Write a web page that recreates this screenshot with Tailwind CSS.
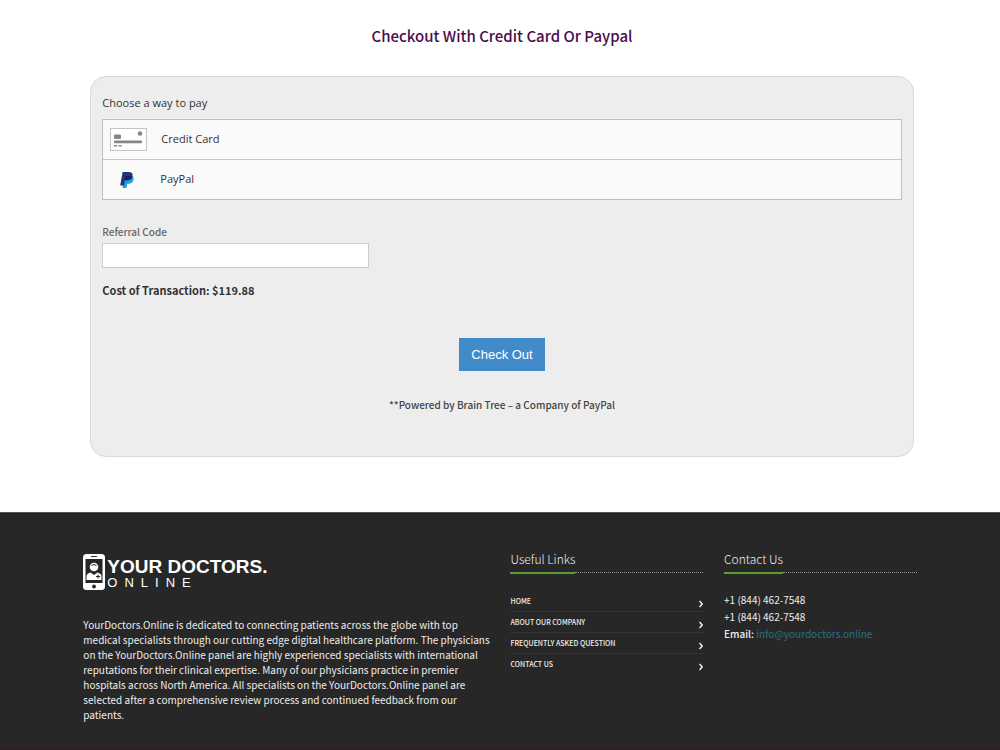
<!DOCTYPE html>
<html lang="en">
<head>
    <meta charset="UTF-8">
    <meta name="viewport" content="width=device-width, initial-scale=1.0">
    <title>Checkout | YourDoctors.Online</title>
    <script src="https://cdn.jsdelivr.net/npm/@tailwindcss/browser@4"></script>
</head>
<body class="bg-white font-['Noto_Sans_CJK_SC',sans-serif] text-[#333]">
    <!-- Checkout -->
    <main class="w-5/6 max-w-6xl mx-auto pt-6 pb-[55px] pl-[7px] pr-[3px]">
        <h1 class="text-[15px] leading-6 font-medium text-center text-[#4b0d4b]">Checkout With Credit Card Or Paypal</h1>

        <form class="mt-7 rounded-2xl border border-[#d9d9d9] bg-[#ededed] px-[11px] pt-4 pb-[41px]" action="#" method="post">
            <h2 class="text-[11px] leading-5 font-['Open_Sans',sans-serif]">Choose a way to pay</h2>
            <div class="mt-1.5 border border-[#bfbfbf] bg-[#fafafa] divide-y divide-[#c8c8c8] font-['Open_Sans',sans-serif] text-[11px]">
                <button type="button" class="flex items-center w-full h-10 px-[7px] text-left cursor-pointer">
                    <svg class="w-[37px] h-6 mr-3.5" viewBox="0 0 37 24" fill="#868686">
                        <rect x="0.5" y="0.5" width="36" height="22" fill="#fff" stroke="#c4c4c4"/>
                        <rect x="4" y="6.500" width="7" height="4.500" rx="1"/>
                        <circle cx="30" cy="5.500" r="2.300"/>
                        <rect x="4" y="12.500" width="28" height="2.700" rx="1"/>
                        <rect x="4" y="17" width="3" height="1.500"/>
                        <rect x="8.500" y="17" width="3" height="1.500"/>
                    </svg>
                    Credit Card
                </button>
                <button type="button" class="flex items-center w-full h-[39px] px-[7px] text-left cursor-pointer">
                    <svg class="w-9 h-6 mr-3.5" viewBox="0 0 36 24">
                        <path d="M14.500 7.500H20c3 0 4 1.600 3.500 4-.6 3-2.400 4.200-5 4.200h-1.300L16.500 20h-4z" fill="#1ba0dd"/>
                        <path d="M12.600 4h6.200c2.900 0 4.200 1.500 3.700 4-.6 3-2.500 4.300-5.400 4.300h-2.200L14 17.500h-3.800z" fill="#263577"/>
                        <path d="M15.400 8h6.900c-.7 3-2.500 4.300-5.200 4.300h-2.200z" fill="#1b1f5b"/>
                    </svg>
                    PayPal
                </button>
            </div>

            <label for="referral" class="block mt-6 text-[10px] leading-4 font-medium text-[#666]">Referral Code</label>
            <input id="referral" type="text" class="block w-1/3 h-[25px] mt-[3px] px-2 border border-[#ccc] bg-white text-xs">

            <p class="mt-3 text-[11px] leading-5 font-bold">Cost of Transaction: $119.88</p>

            <div class="mt-[38px] text-center">
                <button type="submit" class="h-[33px] px-3 bg-[#428bca] text-white text-[13px] font-['Liberation_Sans',sans-serif] cursor-pointer">Check Out</button>
                <p class="mt-6 text-[10px] leading-5 font-medium text-[#444]">**Powered by Brain Tree – a Company of PayPal</p>
            </div>
        </form>
    </main>

    <!-- Footer -->
    <footer class="bg-[#272727] border-t border-t-[#555] border-b-2 border-b-[#2b2025] text-[#eee]">
        <div class="w-5/6 max-w-6xl mx-auto pt-10 pb-[26px] grid grid-cols-4 gap-[21px]">
            <div class="col-span-2">
                <a href="#" class="flex items-center gap-0.5 text-white font-['Liberation_Sans',sans-serif]">
                    <svg class="w-[22px] h-[38px]" viewBox="0 0 22 38">
                        <rect x="0" y="1" width="22" height="36" rx="3.500" fill="#fff"/>
                        <rect x="2.500" y="6" width="17" height="24" fill="#272727"/>
                        <rect x="8" y="3" width="6" height="1" rx="0.500" fill="#272727"/>
                        <circle cx="11" cy="33.500" r="1.900" fill="#272727"/>
                        <circle cx="11" cy="14" r="4.300" fill="#fff"/>
                        <path d="M8.500 12.500q2.500-2 5 0" fill="none" stroke="#272727"/>
                        <path d="M3.500 27v-3.500q0-3 4-4l3.500 2.500 3.500-2.500q4 1 4 4V27z" fill="#fff"/>
                        <path d="M15 21.500v4M13 23.500h4" stroke="#272727"/>
                    </svg>
                    <span class="pt-1">
                        <span class="block text-[19px] leading-[18px] font-bold">YOUR DOCTORS.</span>
                        <span class="block text-[13px] leading-[14px] tracking-[7px]">ONLINE</span>
                    </span>
                </a>
                <p class="mt-[26px] -mr-1 text-[10px] leading-[15px]">YourDoctors.Online is dedicated to connecting patients across the globe with top medical specialists through our cutting edge digital healthcare platform. The physicians on the YourDoctors.Online panel are highly experienced specialists with international reputations for their clinical expertise. Many of our physicians practice in premier hospitals across North America. All specialists on the YourDoctors.Online panel are selected after a comprehensive review process and continued feedback from our patients.</p>
            </div>

            <div class="-mt-1">
                <div class="flex items-start">
                    <h3 class="pb-[3px] border-b-2 border-[#5a9e2f] text-xs leading-5 font-light">Useful Links</h3>
                    <span class="grow self-end mb-px border-b border-dotted border-[#999]"></span>
                </div>
                <ul class="mt-[17px] text-[7px] leading-5 font-medium divide-y divide-[#363636]">
                    <li><a href="#" class="flex items-center justify-between h-5">HOME <svg class="w-1 h-2 mt-1.5" viewBox="0 0 4 8" fill="none" stroke="#eee" stroke-width="1.500"><path d="M0.500 1 3.200 4 0.500 7"/></svg></a></li>
                    <li><a href="#" class="flex items-center justify-between h-5">ABOUT OUR COMPANY <svg class="w-1 h-2 mt-1.5" viewBox="0 0 4 8" fill="none" stroke="#eee" stroke-width="1.500"><path d="M0.500 1 3.200 4 0.500 7"/></svg></a></li>
                    <li><a href="#" class="flex items-center justify-between h-5">FREQUENTLY ASKED QUESTION <svg class="w-1 h-2 mt-1.5" viewBox="0 0 4 8" fill="none" stroke="#eee" stroke-width="1.500"><path d="M0.500 1 3.200 4 0.500 7"/></svg></a></li>
                    <li><a href="#" class="flex items-center justify-between h-5">CONTACT US <svg class="w-1 h-2 mt-1.5" viewBox="0 0 4 8" fill="none" stroke="#eee" stroke-width="1.500"><path d="M0.500 1 3.200 4 0.500 7"/></svg></a></li>
                </ul>
            </div>

            <div class="-mt-1">
                <div class="flex items-start">
                    <h3 class="pb-[3px] border-b-2 border-[#5a9e2f] text-xs leading-5 font-light">Contact Us</h3>
                    <span class="grow self-end mb-px border-b border-dotted border-[#999]"></span>
                </div>
                <address class="mt-[17px] text-[10px] leading-[17px] not-italic">
                    <p>+1 (844) 462-7548</p>
                    <p>+1 (844) 462-7548</p>
                    <p><span class="font-medium">Email:</span> <a href="mailto:info@yourdoctors.online" class="text-[#2a7185]">info@yourdoctors.online</a></p>
                </address>
            </div>
        </div>
    </footer>
</body>
</html>
